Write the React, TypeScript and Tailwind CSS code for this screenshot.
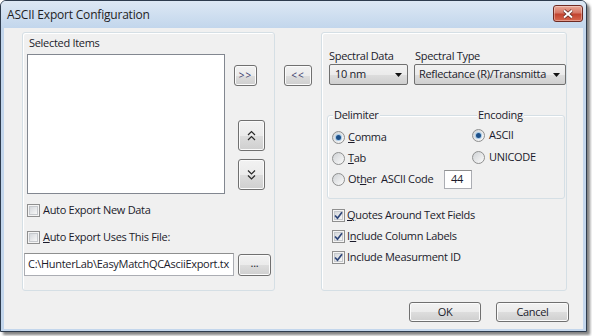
import type { ReactNode } from "react";

const btnBg =
  "bg-[linear-gradient(to_bottom,#f2f2f2_0%,#ebebeb_50%,#dddddd_51%,#cfcfcf_100%)]";

function Btn({
  className = "",
  children,
}: {
  className?: string;
  children?: ReactNode;
}) {
  return (
    <div
      className={`flex items-center justify-center rounded-[3px] border border-[#707070] ${btnBg} shadow-[inset_0_0_0_1px_#fbfbfb] ${className}`}
    >
      {children}
    </div>
  );
}

function Check({ checked }: { checked?: boolean }) {
  return (
    <span className="flex h-[13px] w-[13px] shrink-0 items-center justify-center border border-[#8f8f8f] bg-[#f4f4f4]">
      <span className="relative flex h-[9px] w-[9px] items-center justify-center border border-[#c6c9cd] bg-[linear-gradient(135deg,#d5d8dc,#f7f7f7)]">
        {checked && (
          <svg width="11" height="11" viewBox="0 0 11 11" className="absolute">
            <path
              d="M2 5.5 L4.5 8.2 L9 2.2"
              fill="none"
              stroke="#30477a"
              strokeWidth="1.7"
            />
          </svg>
        )}
      </span>
    </span>
  );
}

function Radio({ checked }: { checked?: boolean }) {
  return (
    <span className="flex h-[13px] w-[13px] shrink-0 items-center justify-center rounded-full border border-[#8e8f8f] bg-[linear-gradient(135deg,#cfd2d5,#fbfbfb)]">
      {checked && (
        <span className="h-[5px] w-[5px] rounded-full bg-[#1c4f88] shadow-[0_0_0_1px_#a9cbe8]" />
      )}
    </span>
  );
}

function Combo({ text, className = "" }: { text: string; className?: string }) {
  return (
    <div
      className={`flex h-[21px] items-center justify-between overflow-hidden rounded-[2px] border border-[#707070] ${btnBg} pl-[4px] pr-[5px] ${className}`}
    >
      <span className="whitespace-nowrap">{text}</span>
      <svg width="7" height="4" viewBox="0 0 7 4" className="ml-[3px] shrink-0">
        <path d="M0 0 H7 L3.5 4 Z" fill="#111" />
      </svg>
    </div>
  );
}

function Chevrons({ up }: { up?: boolean }) {
  const a = up ? "1,5 4.5,1.5 8,5" : "1,1.5 4.5,5 8,1.5";
  const b = up ? "1,10 4.5,6.5 8,10" : "1,6.5 4.5,10 8,6.5";
  return (
    <svg width="9" height="12" viewBox="0 0 9 12">
      <polyline points={a} fill="none" stroke="#2a2a2a" strokeWidth="1.2" />
      <polyline points={b} fill="none" stroke="#2a2a2a" strokeWidth="1.2" />
    </svg>
  );
}

const panel =
  "rounded-[3px] border border-[#d5dfe5] shadow-[inset_1px_1px_0_#ffffff]";

export default function App() {
  return (
    <div className="h-[336px] w-[592px] bg-white font-['Open_Sans',sans-serif] text-[11px] tracking-[-0.3px] text-[#1b1b2b]">
      <div className="flex h-[332px] w-[587px] flex-col rounded-t-[6px] border border-[#2e3c4e] bg-[#c3d6ec] shadow-[3px_3px_3px_rgba(0,0,0,0.5)]">
        {/* title bar */}
        <div className="flex h-[27px] items-start justify-between rounded-t-[5px] bg-[linear-gradient(to_bottom,#dde8f4,#c2d6ec)] pl-[6px] pr-[3px]">
          <span className="mt-[5px] text-[12px] leading-[17px] tracking-[-0.2px] text-[#1e1e1e]">
            ASCII Export Configuration
          </span>
          <div className="mt-[4px] flex h-[17px] w-[30px] items-center justify-center rounded-[3px] border border-[#6e2a22] bg-[linear-gradient(to_bottom,#e9a896_0%,#d67766_45%,#c2432f_55%,#d8684f_100%)] shadow-[inset_0_0_0_1px_rgba(255,255,255,0.35)]">
            <svg width="12" height="10" viewBox="0 0 12 10">
              <path d="M2 1.5 L10 8.5 M10 1.5 L2 8.5" stroke="#5a231c" strokeWidth="3.4" />
              <path d="M2 1.5 L10 8.5 M10 1.5 L2 8.5" stroke="#ffffff" strokeWidth="2" />
            </svg>
          </div>
        </div>

        {/* client area */}
        <div className="mx-[3px] mb-[2px] flex flex-1 flex-col bg-[#f0f0f0]">
          <div className="flex pl-[18px] pt-[4px]">
            {/* left panel */}
            <div className={`flex h-[259px] w-[253px] flex-col ${panel}`}>
              <span className="ml-[6px] mt-[2px] h-[16px] leading-[16px]">
                Selected Items
              </span>
              <div className="mt-[3px] flex">
                <div className="ml-[4px] h-[140px] w-[198px] border border-[#828790] bg-white" />
                <div className="ml-[9px] flex flex-col items-start">
                  <Btn className="mt-[11px] h-[21px] w-[23px] text-[10px] tracking-[1px] text-[#3a3a6a]">
                    &gt;&gt;
                  </Btn>
                  <Btn className="ml-[4px] mt-[34px] h-[31px] w-[27px]">
                    <Chevrons up />
                  </Btn>
                  <Btn className="ml-[4px] mt-[8px] h-[31px] w-[27px]">
                    <Chevrons />
                  </Btn>
                </div>
              </div>
              <label className="ml-[4px] mt-[8px] flex h-[16px] items-center gap-[3px]">
                <Check />
                <span>Auto Export New Data</span>
              </label>
              <label className="ml-[4px] mt-[11px] flex h-[16px] items-center gap-[3px]">
                <Check />
                <span>
                  <span className="underline">A</span>uto Export Uses This File:
                </span>
              </label>
              <div className="mt-[8px] flex items-center">
                <div className="ml-[1px] flex h-[23px] w-[210px] items-center overflow-hidden whitespace-nowrap border border-[#abadb3] border-t-[#8e8f8f] bg-white pl-[3px]">
                  C:\HunterLab\EasyMatchQCAsciiExport.tx
                </div>
                <Btn className="ml-[4px] h-[22px] w-[33px] pb-[3px]">...</Btn>
              </div>
            </div>

            <div className="ml-[9px] mt-[33px]">
              <Btn className="h-[21px] w-[28px] text-[10px] tracking-[1px] text-[#3a3a6a]">
                &lt;&lt;
              </Btn>
            </div>

            {/* right panel */}
            <div className={`ml-[9px] flex h-[259px] w-[246px] flex-col ${panel}`}>
              <div className="ml-[7px] mt-[15px] flex">
                <div className="flex w-[79px] flex-col">
                  <span className="h-[16px] leading-[16px]">Spectral Data</span>
                  <Combo text="10 nm" className="w-[79px] pl-[5px]" />
                </div>
                <div className="ml-[6px] flex w-[152px] flex-col">
                  <span className="h-[16px] pl-[1px] leading-[16px]">
                    Spectral Type
                  </span>
                  <Combo text="Reflectance (R)/Transmitta" className="w-[152px]" />
                </div>
              </div>

              <div className="relative ml-[5px] mt-[30px] flex h-[84px] w-[238px] rounded-[3px] border border-[#d5dfe5] shadow-[inset_1px_1px_0_#ffffff]">
                <span className="absolute left-[5px] top-[-9px] bg-[#f0f0f0] px-[1px] leading-[16px]">
                  Delimiter
                </span>
                <span className="absolute left-[149px] top-[-9px] bg-[#f0f0f0] px-[1px] leading-[16px]">
                  Encoding
                </span>
                <div className="ml-[4px] flex w-[140px] flex-col pt-[11px]">
                  <label className="flex h-[21px] items-center gap-[3px]">
                    <Radio checked />
                    <span>
                      <span className="underline">C</span>omma
                    </span>
                  </label>
                  <label className="flex h-[21px] items-center gap-[3px]">
                    <Radio />
                    <span>
                      <span className="underline">T</span>ab
                    </span>
                  </label>
                  <div className="flex h-[21px] items-center">
                    <Radio />
                    <span className="ml-[3px] w-[33px]">
                      Ot<span className="underline">h</span>er
                    </span>
                    <span className="w-[63px]">ASCII Code</span>
                    <div className="flex h-[19px] w-[28px] items-center border border-[#abadb3] border-t-[#8e8f8f] bg-white pl-[6px]">
                      44
                    </div>
                  </div>
                </div>
                <div className="flex flex-col pt-[8px]">
                  <label className="flex h-[22px] items-center gap-[4px]">
                    <Radio checked />
                    <span>ASCII</span>
                  </label>
                  <label className="flex h-[22px] items-center gap-[4px]">
                    <Radio />
                    <span>UNICODE</span>
                  </label>
                </div>
              </div>

              <div className="ml-[10px] mt-[6px] flex flex-col">
                <label className="flex h-[21px] items-center gap-[2px]">
                  <Check checked />
                  <span>
                    <span className="underline">Q</span>uotes Around Text Fields
                  </span>
                </label>
                <label className="flex h-[21px] items-center gap-[2px]">
                  <Check checked />
                  <span>
                    I<span className="underline">n</span>clude Column Labels
                  </span>
                </label>
                <label className="flex h-[21px] items-center gap-[2px]">
                  <Check checked />
                  <span>Include Measurment ID</span>
                </label>
              </div>
            </div>
          </div>

          <div className="mt-[11px] flex justify-end gap-[15px] pr-[14px]">
            <Btn className="h-[20px] w-[72px] border-[#3c7fb1] shadow-[inset_0_0_0_1px_#6fd3f7]">
              OK
            </Btn>
            <Btn className="h-[20px] w-[73px]">Cancel</Btn>
          </div>
        </div>
      </div>
    </div>
  );
}
